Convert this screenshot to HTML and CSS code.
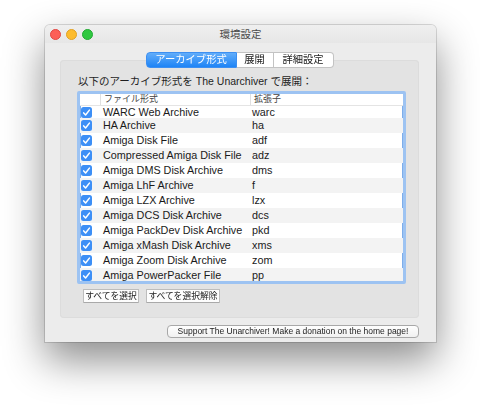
FILE: index.html
```html
<!DOCTYPE html>
<html lang="ja">
<head>
    <meta charset="UTF-8">
    <title>環境設定</title>
    <link rel="stylesheet" href="styles.css">
</head>
<body>
    <div class="desktop">
    <div class="window">
        <div class="titlebar">
            <div class="lights">
                <span class="light close"></span>
                <span class="light minimize"></span>
                <span class="light zoom"></span>
            </div>
            <div class="title">環境設定</div>
            <div class="spacer"></div>
        </div>

        <div class="content">
            <div class="tabs">
                <div class="tab selected tab-formats">アーカイブ形式</div>
                <div class="tab tab-extract">展開</div>
                <div class="tab tab-advanced">詳細設定</div>
            </div>

            <div class="group">
                <div class="intro">以下のアーカイブ形式を The Unarchiver で展開：</div>

                <div class="table">
                    <div class="table-header">
                        <div class="hcell"></div>
                        <div class="hcell divided">ファイル形式</div>
                        <div class="hcell divided">拡張子</div>
                    </div>
                    <div class="table-body" id="formatRows"></div>
                </div>

                <div class="list-buttons">
                    <button class="small-button">すべてを選択</button>
                    <button class="small-button">すべてを選択解除</button>
                </div>
            </div>

            <div class="footer">
                <button class="donate-button">Support The Unarchiver! Make a donation on the home page!</button>
            </div>
        </div>
    </div>
    </div>

    <script>
        const formats = [
            ['WARC Web Archive', 'warc'],
            ['HA Archive', 'ha'],
            ['Amiga Disk File', 'adf'],
            ['Compressed Amiga Disk File', 'adz'],
            ['Amiga DMS Disk Archive', 'dms'],
            ['Amiga LhF Archive', 'f'],
            ['Amiga LZX Archive', 'lzx'],
            ['Amiga DCS Disk Archive', 'dcs'],
            ['Amiga PackDev Disk Archive', 'pkd'],
            ['Amiga xMash Disk Archive', 'xms'],
            ['Amiga Zoom Disk Archive', 'zom'],
            ['Amiga PowerPacker File', 'pp']
        ];

        const checkbox = `<svg class="check" width="11" height="11" viewBox="0 0 11 11">
            <rect x="0" y="0" width="11" height="11" rx="2.5" fill="#3d8ff6"/>
            <path d="M2.7 5.9 L4.6 8 L8.4 3.1" stroke="#fff" stroke-width="1.5" fill="none" stroke-linecap="round" stroke-linejoin="round"/>
        </svg>`;

        // first row is scrolled a little under the header, so it is shorter
        document.getElementById('formatRows').innerHTML = formats.map(f => `
            <div class="row">
                <div class="cell cell-check">${checkbox}</div>
                <div class="cell cell-name">${f[0]}</div>
                <div class="cell cell-ext">${f[1]}</div>
            </div>`).join('');
    </script>
</body>
</html>
```

FILE: styles.css
```css
html, body {
    margin: 0;
    background-color: #fff;
}
body {
    font-family: "Liberation Sans", "Noto Sans CJK JP", sans-serif;
    color: #1a1a1a;
}
.desktop {
    width: 480px;
    height: 407px;
    padding: 25px 0 0 45px;
    box-sizing: border-box;
    background-color: #fff;
}
.window {
    width: 391px;
    height: 317px;
    box-sizing: border-box;
    background-color: #ececec;
    border-radius: 5px 5px 0 0;
    box-shadow: 0 0 0 1px rgba(0,0,0,0.14);
    filter: drop-shadow(0 18px 20px rgba(0,0,0,0.45));
    display: flex;
    flex-direction: column;
}
.titlebar {
    height: 18px;
    display: flex;
    align-items: center;
    background: linear-gradient(#efefef, #e6e6e6);
    border-radius: 5px 5px 0 0;
}
.lights {
    width: 48px;
    display: flex;
    gap: 5px;
    padding-left: 5px;
    box-sizing: border-box;
}
.light {
    width: 11px;
    height: 11px;
    border-radius: 50%;
    box-sizing: border-box;
}
.close {
    background-color: #fc5f57;
    border: 1px solid #e24641;
}
.minimize {
    background-color: #fdbc2e;
    border: 1px solid #e1a124;
}
.zoom {
    background-color: #2fc840;
    border: 1px solid #23a933;
}
.title {
    flex: 1;
    text-align: center;
    font-size: 10.5px;
    line-height: 12px;
    color: #4a4a4a;
}
.spacer {
    width: 48px;
}
.content {
    flex: 1;
    padding: 9px 17px 4px 15px;
    display: flex;
    flex-direction: column;
}
.tabs {
    display: flex;
    justify-content: center;
    height: 16px;
    position: relative;
    z-index: 1;
}
.tab {
    height: 16px;
    box-sizing: border-box;
    font-size: 10.3px;
    line-height: 14px;
    text-align: center;
    background-color: #fff;
    color: #222;
    border: 1px solid #c3c3c3;
    border-left: none;
}
.tab-formats {
    width: 91px;
    border-radius: 4px 0 0 4px;
    border-left: 1px solid #c3c3c3;
}
.tab-extract {
    width: 37px;
}
.tab-advanced {
    width: 60px;
    border-radius: 0 4px 4px 0;
}
.tab.selected {
    background: linear-gradient(#62adfa, #1e84f6);
    border-color: #3d8ff1;
    color: #fff;
}
.group {
    margin-top: -8px;
    height: 258px;
    box-sizing: border-box;
    padding: 15px 13px 15px 17px;
    background-color: #e3e3e3;
    border-radius: 4px;
    box-shadow: inset 0 0 0 1px #dcdcdc;
}
.intro {
    font-size: 10.5px;
    line-height: 12px;
    color: #1e1e1e;
    margin-left: 1px;
    margin-bottom: 4px;
}
.table {
    height: 193px;
    box-sizing: border-box;
    background-color: #fff;
    border: 3px solid #9dc3f2;
    border-radius: 2px;
    box-shadow: inset 0 0 0 1px #7eaeea;
    overflow: hidden;
    display: flex;
    flex-direction: column;
}
.table-header {
    height: 12px;
    box-sizing: border-box;
    border-bottom: 1px solid #e4e4e4;
    display: grid;
    grid-template-columns: 20px 150px 1fr;
    background-color: #fff;
}
.hcell {
    font-size: 9px;
    line-height: 11px;
    height: 11px;
    color: #444;
    padding-left: 3px;
    white-space: nowrap;
}
.hcell.divided {
    border-left: 1px solid #e0e0e0;
}
.table-body {
    flex: 1;
    overflow: hidden;
}
.row {
    height: 15px;
    display: grid;
    grid-template-columns: 20px 150px 1fr;
    align-items: center;
}
.row:first-child {
    height: 12px;
}
.row:first-child .cell {
    line-height: 12px;
}
.row:nth-child(even) {
    background-color: #f3f3f3;
}
.cell {
    font-size: 10.8px;
    line-height: 15px;
    white-space: nowrap;
}
.cell-check {
    padding-left: 1px;
    display: flex;
    align-items: center;
}
.cell-name {
    padding-left: 3px;
}
.cell-ext {
    padding-left: 2px;
}
.list-buttons {
    display: flex;
    gap: 7px;
    margin-top: 5px;
    padding-left: 6px;
}
.small-button {
    height: 14px;
    padding: 0;
    font-family: "Liberation Sans", "Noto Sans CJK JP", sans-serif;
    font-size: 8.8px;
    line-height: 12px;
    white-space: nowrap;
    color: #222;
    background-color: #fdfdfd;
    border: 1px solid #bdbdbd;
    border-bottom-color: #a9a9a9;
    border-radius: 1px;
}
.small-button:first-child {
    width: 56px;
}
.small-button:last-child {
    width: 74px;
}
.footer {
    display: flex;
    justify-content: flex-end;
    margin-top: 7px;
}
.donate-button {
    width: 252px;
    height: 13px;
    padding: 0;
    font-family: "Liberation Sans", sans-serif;
    font-size: 8.5px;
    line-height: 11px;
    white-space: nowrap;
    color: #222;
    background: linear-gradient(#fefefe, #f1f1f1);
    border: 1px solid #a8a8a8;
    border-radius: 4px;
}
```
